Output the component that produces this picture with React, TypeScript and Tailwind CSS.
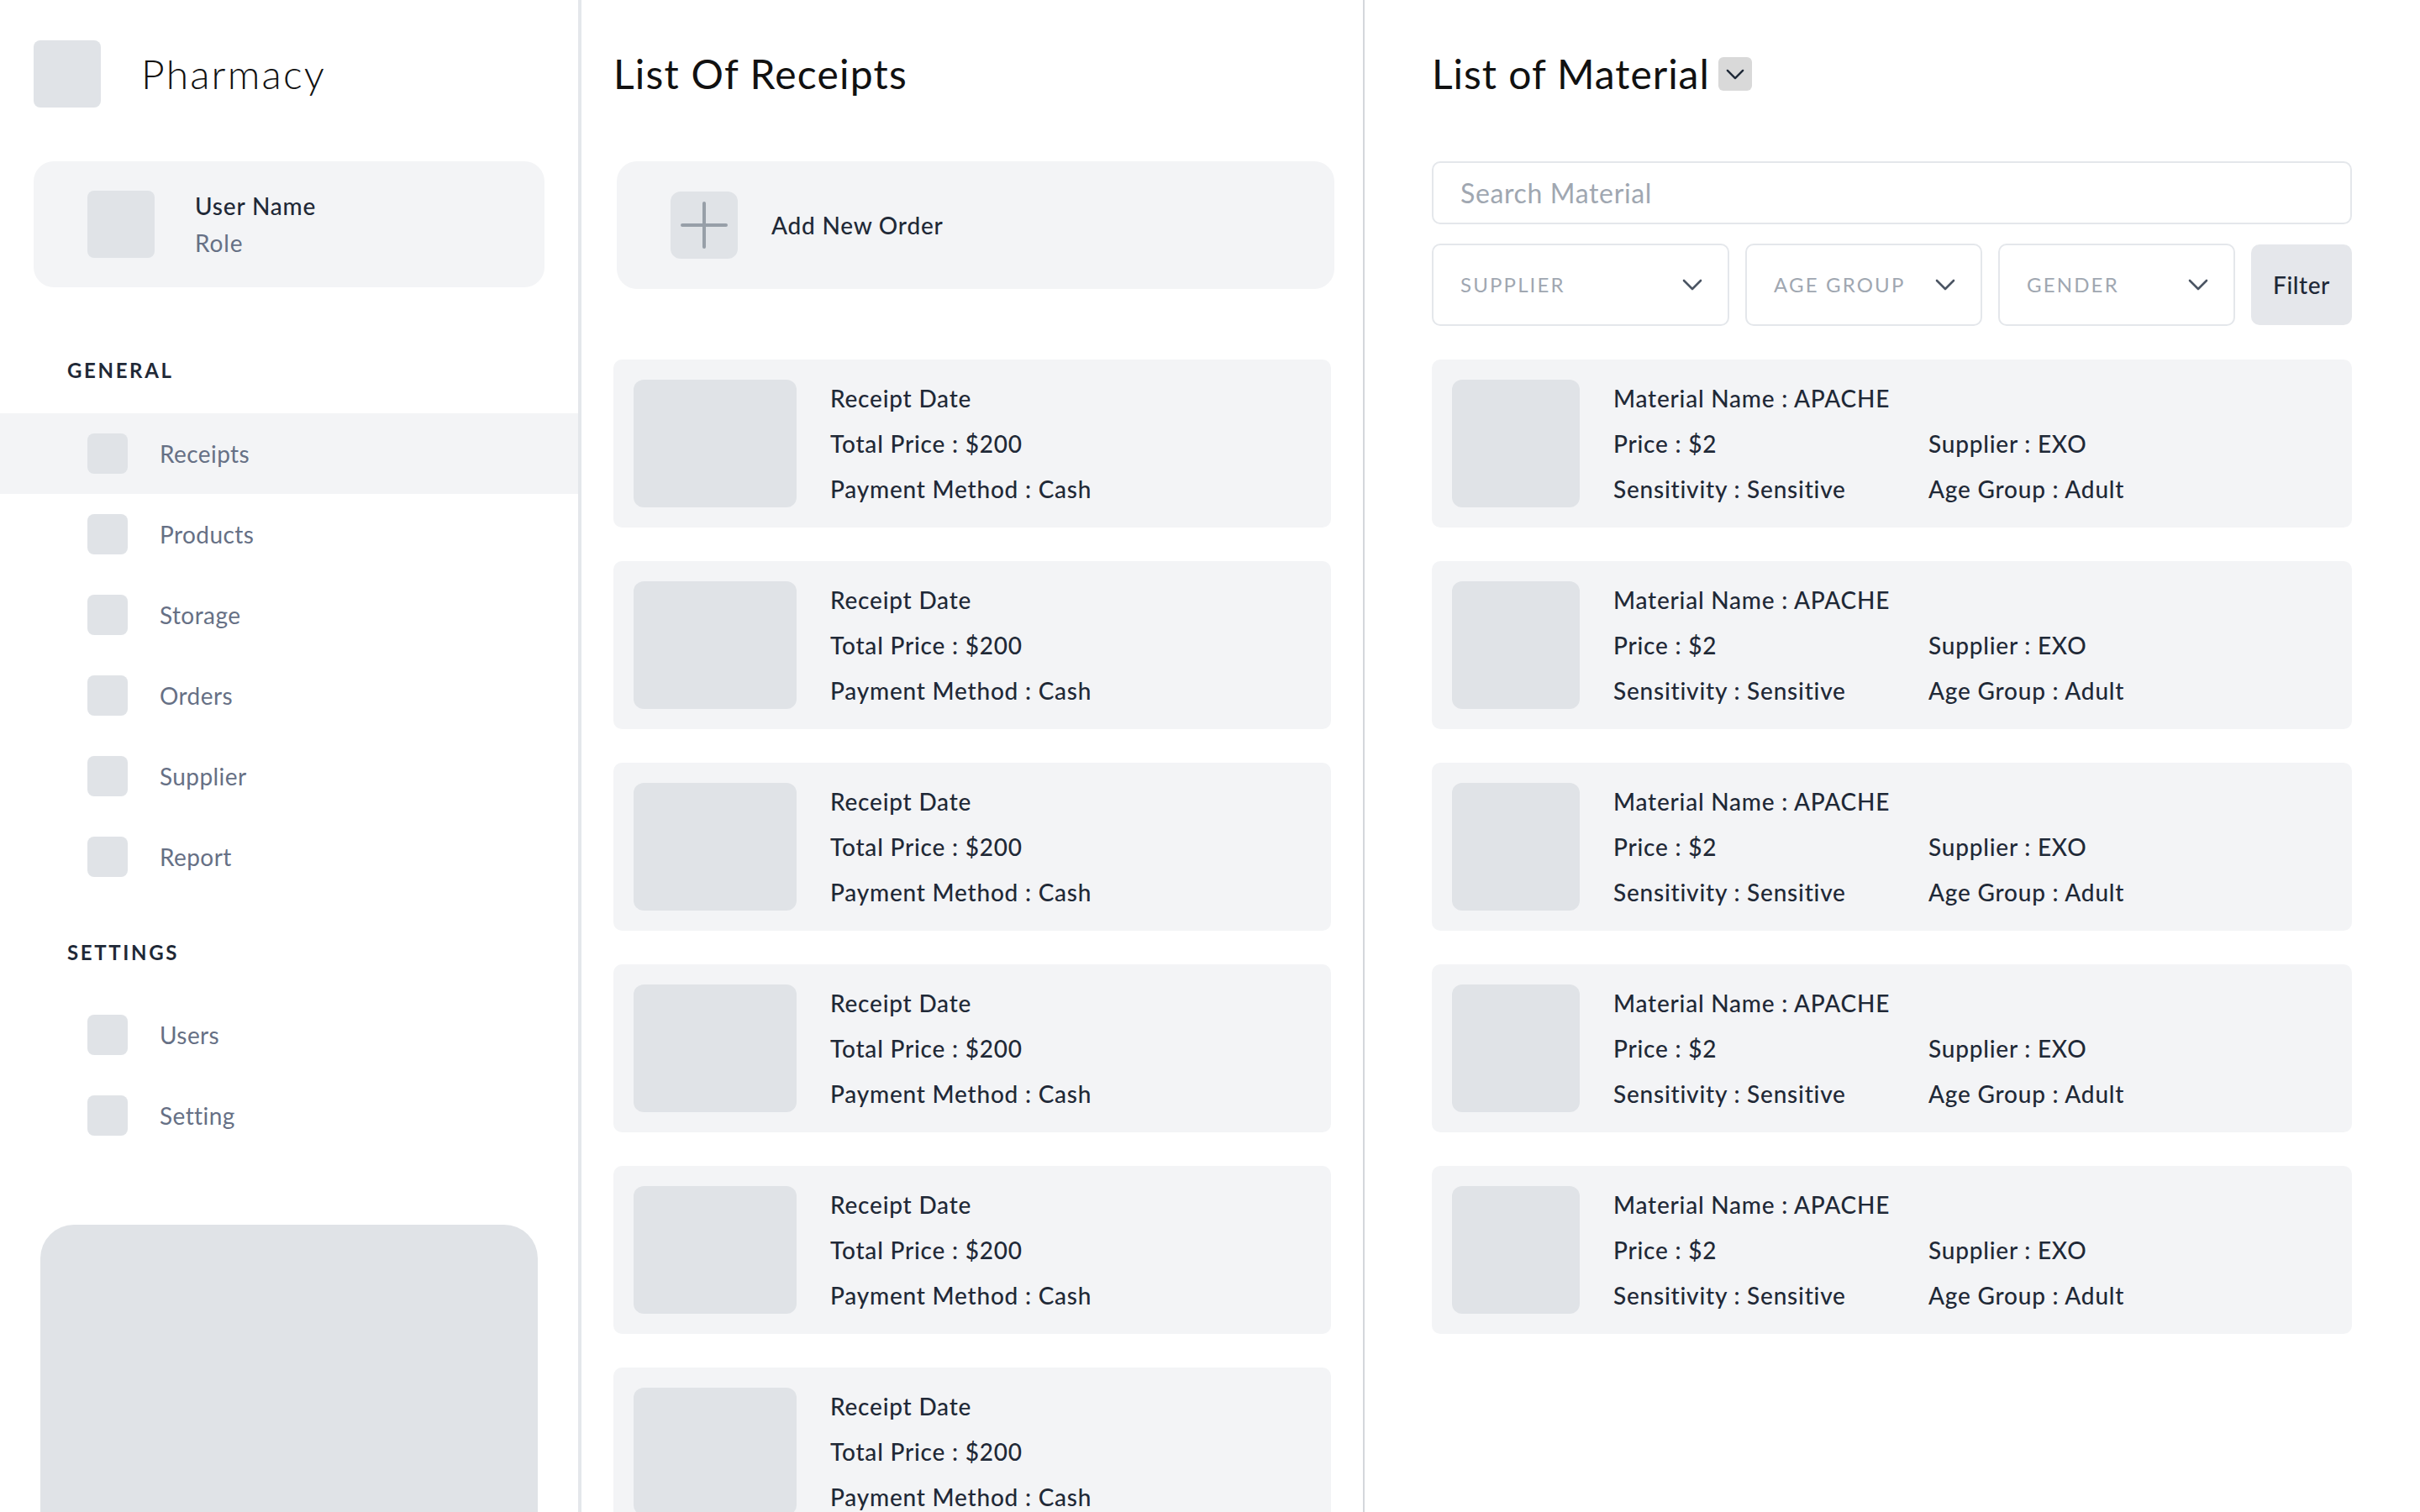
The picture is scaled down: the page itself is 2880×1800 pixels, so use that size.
import React from "react";

const generalNav = ["Receipts", "Products", "Storage", "Orders", "Supplier", "Report"];
const settingsNav = ["Users", "Setting"];

const Chevron = ({ className }: { className?: string }) => (
  <svg viewBox="0 0 24 14" fill="none" className={className}>
    <polyline
      points="2,2 12,12 22,2"
      stroke="currentColor"
      strokeWidth="2.6"
      strokeLinecap="round"
      strokeLinejoin="round"
    />
  </svg>
);

const NavItem = ({ label, active }: { label: string; active?: boolean }) => (
  <div
    className={`h-24 flex items-center pl-[104px] gap-[38px] ${
      active ? "bg-[#f3f4f6]" : ""
    }`}
  >
    <div className="w-12 h-12 rounded-lg bg-[#e0e3e7]" />
    <span className="text-[28px] tracking-[0.015em] text-[#667085]">{label}</span>
  </div>
);

const Sidebar = () => (
  <aside className="w-[692px] shrink-0 h-full border-r-4 border-[#e4e7eb] flex flex-col">
    <div className="h-20 mt-12 px-10 flex items-center gap-12">
      <div className="w-20 h-20 rounded-lg bg-[#e0e3e7]" />
      <span className="text-[48px] font-light tracking-[0.045em] text-[#111]">Pharmacy</span>
    </div>

    <div className="mx-10 mt-16 h-[150px] rounded-3xl bg-[#f3f4f6] flex items-center pl-16 gap-12">
      <div className="w-20 h-20 rounded-lg bg-[#e0e3e7]" />
      <div className="flex flex-col text-[28px] leading-[44px] tracking-[0.03em]">
        <span className="font-medium text-[#1f2937]">User Name</span>
        <span className="text-[#667085]">Role</span>
      </div>
    </div>

    {/* General */}
    <div className="mt-[83px] h-8 pl-20 flex items-center text-[24px] font-bold tracking-[0.11em] text-[#1f2937]">
      GENERAL
    </div>
    <div className="mt-[35px]">
      {generalNav.map((item) => (
        <NavItem key={item} label={item} active={item === "Receipts"} />
      ))}
    </div>

    {/* Settings */}
    <div className="mt-[50px] h-8 pl-20 flex items-center text-[24px] font-bold tracking-[0.11em] text-[#1f2937]">
      SETTINGS
    </div>
    <div className="mt-[34px]">
      {settingsNav.map((item) => (
        <NavItem key={item} label={item} />
      ))}
    </div>

    <div className="mx-12 mt-[82px] flex-1 rounded-t-[40px] bg-[#e0e3e7]" />
  </aside>
);

const ReceiptCard = () => (
  <div className="h-[200px] shrink-0 rounded-[10px] bg-[#f3f4f6] p-6 flex items-center gap-10">
    <div className="w-[194px] h-[152px] rounded-xl bg-[#e0e3e7]" />
    <div className="flex flex-col text-[28px] leading-[54px] font-medium tracking-[0.028em] text-[#1f2937]">
      <span>Receipt Date</span>
      <span>Total Price : $200</span>
      <span>Payment Method : Cash</span>
    </div>
  </div>
);

const MaterialCard = () => (
  <div className="h-[200px] shrink-0 rounded-[10px] bg-[#f3f4f6] p-6 flex items-center gap-10">
    <div className="w-[152px] h-[152px] rounded-xl bg-[#e0e3e7]" />
    <div className="grid grid-cols-[375px_1fr] text-[28px] leading-[54px] font-medium tracking-[0.028em] text-[#1f2937]">
      <span className="col-span-2">Material Name : APACHE</span>
      <span>Price : $2</span>
      <span>Supplier : EXO</span>
      <span>Sensitivity : Sensitive</span>
      <span>Age Group : Adult</span>
    </div>
  </div>
);

const Select = ({ label, width }: { label: string; width: string }) => (
  <div
    className={`${width} h-full rounded-[10px] border-2 border-[#e4e7eb] bg-white flex items-center justify-between pl-8 pr-[30px]`}
  >
    <span className="text-[24px] tracking-[0.09em] text-[#a0a7b1]">{label}</span>
    <Chevron className="w-6 h-[14px] text-[#4b5563]" />
  </div>
);

export default function App() {
  return (
    <div className="h-screen w-full overflow-hidden bg-white flex font-[Lato,'Open_Sans',sans-serif]">
      <Sidebar />

      {/* Receipts */}
      <section className="w-[932px] shrink-0 h-full border-r-2 border-[#d4d7dc] px-[38px] flex flex-col">
        <div className="h-20 mt-12 shrink-0 flex items-center">
          <h1 className="text-[48px] tracking-[0.025em] text-[#111]">List Of Receipts</h1>
        </div>
        <div className="mt-16 h-[152px] shrink-0 ml-1 -mr-1 rounded-3xl bg-[#f3f4f6] flex items-center pl-16 gap-10">
          <div className="w-20 h-20 rounded-xl bg-[#e0e3e7] flex items-center justify-center">
            <svg width="56" height="56" viewBox="0 0 56 56" fill="none">
              <path
                d="M28 2v52M2 28h52"
                stroke="#979fa8"
                strokeWidth="4"
                strokeLinecap="round"
              />
            </svg>
          </div>
          <span className="text-[28px] font-medium tracking-[0.028em] text-[#1f2937]">
            Add New Order
          </span>
        </div>
        <div className="mt-[84px] flex flex-col gap-10">
          {Array.from({ length: 6 }).map((_, i) => (
            <ReceiptCard key={i} />
          ))}
        </div>
      </section>

      {/* Materials */}
      <section className="flex-1 h-full pl-20 pr-[81px] flex flex-col">
        <div className="h-20 mt-12 shrink-0 flex items-center gap-[10px]">
          <h1 className="text-[48px] tracking-[0.02em] text-[#111]">List of Material</h1>
          <div className="w-10 h-10 rounded-md bg-[#d9d9d9] flex items-center justify-center">
            <Chevron className="w-[22px] h-[13px] text-[#1f2937]" />
          </div>
        </div>
        <div className="mt-16 h-[75px] shrink-0 rounded-[10px] border-2 border-[#e4e7eb] flex items-center px-8">
          <span className="text-[32px] tracking-[0.02em] text-[#a0a7b1]">Search Material</span>
        </div>
        <div className="mt-[23px] h-[98px] shrink-0 flex items-center gap-[19px]">
          <Select label="SUPPLIER" width="w-[354px]" />
          <Select label="AGE GROUP" width="w-[282px]" />
          <Select label="GENDER" width="w-[282px]" />
          <button className="flex-1 h-[96px] rounded-[10px] bg-[#e5e7eb] text-[28px] font-medium tracking-[0.02em] text-[#1f2937]">
            Filter
          </button>
        </div>
        <div className="mt-10 flex flex-col gap-10">
          {Array.from({ length: 5 }).map((_, i) => (
            <MaterialCard key={i} />
          ))}
        </div>
      </section>
    </div>
  );
}
